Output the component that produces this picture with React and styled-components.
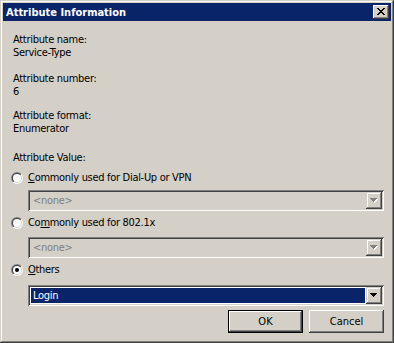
import React from "react";
import styled, { createGlobalStyle, css } from "styled-components";

const GlobalStyle = createGlobalStyle`
  html, body { margin: 0; padding: 0; background: #D4D0C8; }
  * { box-sizing: border-box; }
`;

const FONT = `"DejaVu Sans Condensed", "DejaVu Sans", Tahoma, sans-serif`;

const Window = styled.div`
  width: 394px;
  height: 343px;
  background: #D4D0C8;
  padding: 3px;
  display: flex;
  flex-direction: column;
  font-family: ${FONT};
  font-size: 11px;
  letter-spacing: -0.3px;
  color: #000;
  box-shadow: inset -1px -1px #404040, inset 1px 1px #D4D0C8,
    inset -2px -2px #808080, inset 2px 2px #FFFFFF;
`;

const TitleBar = styled.div`
  height: 18px;
  background: #0A246A;
  display: flex;
  align-items: center;
  justify-content: space-between;
  padding: 0 2px 0 3px;
`;

const TitleText = styled.span`
  color: #fff;
  font-weight: bold;
  font-size: 11px;
  letter-spacing: 0;
  line-height: 13px;
`;

const CloseButton = styled.div`
  width: 16px;
  height: 14px;
  background: #D4D0C8;
  display: flex;
  padding: 3px 0 0 4px;
  box-shadow: inset -1px -1px #404040, inset 1px 1px #FFFFFF,
    inset -2px -2px #808080;
`;

const Content = styled.div`
  flex: 1;
  display: flex;
  flex-direction: column;
  padding: 12px 7px 0 8px;
`;

const InfoGroup = styled.div`
  display: flex;
  flex-direction: column;
  padding-left: 2px;
  margin-bottom: ${(p) => p.$gap || 0}px;
`;

const Line = styled.div`
  line-height: 13px;
  height: 13px;
  white-space: nowrap;
`;

const RadioRow = styled.label`
  display: flex;
  align-items: center;
  height: 13px;
  gap: 5px;
  margin-top: ${(p) => p.$top || 0}px;
  line-height: 13px;
  white-space: nowrap;
`;

const Combo = styled.div`
  margin-left: 17px;
  margin-top: ${(p) => p.$top || 0}px;
  width: 356px;
  height: 21px;
  padding: 2px;
  display: flex;
  background: ${(p) => (p.$disabled ? "#D4D0C8" : "#FFFFFF")};
  box-shadow: inset 1px 1px #808080, inset -1px -1px #FFFFFF,
    inset 2px 2px #404040, inset -2px -2px #D4D0C8;
`;

const ComboText = styled.div`
  flex: 1;
  line-height: 15px;
  padding-left: 2px;
  margin: 1px;
  color: #808080;
  ${(p) =>
    p.$selected &&
    css`
      background: #0A246A;
      color: #FFFFFF;
    `}
`;

const DropButton = styled.div`
  width: 16px;
  height: 17px;
  background: #D4D0C8;
  display: flex;
  align-items: center;
  justify-content: center;
  box-shadow: inset -1px -1px #404040, inset 1px 1px #D4D0C8,
    inset -2px -2px #808080, inset 2px 2px #FFFFFF;
`;

const ButtonRow = styled.div`
  display: flex;
  justify-content: flex-end;
  gap: 6px;
  margin-top: 4px;
`;

const PushButton = styled.div`
  width: 75px;
  height: 23px;
  display: flex;
  align-items: center;
  justify-content: center;
  background: #D4D0C8;
  line-height: 13px;
  letter-spacing: 0;
  ${(p) =>
    p.$default
      ? css`
          box-shadow: inset 0 0 0 1px #000000, inset -2px -2px #404040,
            inset 2px 2px #FFFFFF, inset -3px -3px #808080;
        `
      : css`
          box-shadow: inset -1px -1px #404040, inset 1px 1px #FFFFFF,
            inset -2px -2px #808080;
        `}
`;

const CloseGlyph = () => {
  const rows = [
    "XX....XX",
    ".XX..XX.",
    "..XXXX..",
    "...XX...",
    "..XXXX..",
    ".XX..XX.",
    "XX....XX",
  ];
  const rects = [];
  rows.forEach((r, y) =>
    r.split("").forEach((c, x) => {
      if (c === "X") rects.push(<rect key={`${x}-${y}`} x={x} y={y} width="1" height="1" />);
    })
  );
  return (
    <svg width="8" height="7" viewBox="0 0 8 7" shapeRendering="crispEdges" fill="#000">
      {rects}
    </svg>
  );
};

const Arrow = ({ disabled }) => (
  <svg width="8" height="5" viewBox="0 0 8 5" shapeRendering="crispEdges">
    {disabled && (
      <g fill="#FFFFFF">
        <rect x="1" y="1" width="7" height="1" />
        <rect x="2" y="2" width="5" height="1" />
        <rect x="3" y="3" width="3" height="1" />
        <rect x="4" y="4" width="1" height="1" />
      </g>
    )}
    <g fill={disabled ? "#808080" : "#000000"}>
      <rect x="0" y="0" width="7" height="1" />
      <rect x="1" y="1" width="5" height="1" />
      <rect x="2" y="2" width="3" height="1" />
      <rect x="3" y="3" width="1" height="1" />
    </g>
  </svg>
);

const Radio = ({ checked }) => (
  <svg width="12" height="12" viewBox="0 0 12 12">
    <defs>
      <linearGradient id="rOuter" x1="0" y1="0" x2="1" y2="1">
        <stop offset="0.5" stopColor="#808080" />
        <stop offset="0.5" stopColor="#FFFFFF" />
      </linearGradient>
      <linearGradient id="rInner" x1="0" y1="0" x2="1" y2="1">
        <stop offset="0.5" stopColor="#404040" />
        <stop offset="0.5" stopColor="#D4D0C8" />
      </linearGradient>
    </defs>
    <circle cx="6" cy="6" r="6" fill="url(#rOuter)" />
    <circle cx="6" cy="6" r="5" fill="url(#rInner)" />
    <circle cx="6" cy="6" r="4" fill="#FFFFFF" />
    {checked && <circle cx="6" cy="6" r="2" fill="#000000" />}
  </svg>
);

const RadioSlot = styled.span`
  display: flex;
  width: 12px;
  height: 12px;
`;

const Key = styled.span`
  text-decoration: underline;
`;

export default function App() {
  return (
    <>
      <GlobalStyle />
      <Window>
        <TitleBar>
          <TitleText>Attribute Information</TitleText>
          <CloseButton>
            <CloseGlyph />
          </CloseButton>
        </TitleBar>
        <Content>
          <InfoGroup $gap={13}>
            <Line>Attribute name:</Line>
            <Line>Service-Type</Line>
          </InfoGroup>
          <InfoGroup $gap={11}>
            <Line>Attribute number:</Line>
            <Line>6</Line>
          </InfoGroup>
          <InfoGroup $gap={16}>
            <Line>Attribute format:</Line>
            <Line>Enumerator</Line>
          </InfoGroup>
          <InfoGroup>
            <Line>Attribute Value:</Line>
          </InfoGroup>
          <RadioRow $top={7}>
            <RadioSlot>
              <Radio />
            </RadioSlot>
            <span>
              <Key>C</Key>ommonly used for Dial-Up or VPN
            </span>
          </RadioRow>
          <Combo $disabled $top={6}>
            <ComboText>&lt;none&gt;</ComboText>
            <DropButton>
              <Arrow disabled />
            </DropButton>
          </Combo>
          <RadioRow $top={5}>
            <RadioSlot>
              <Radio />
            </RadioSlot>
            <span>
              Co<Key>m</Key>monly used for 802.1x
            </span>
          </RadioRow>
          <Combo $disabled $top={8}>
            <ComboText>&lt;none&gt;</ComboText>
            <DropButton>
              <Arrow disabled />
            </DropButton>
          </Combo>
          <RadioRow $top={5}>
            <RadioSlot>
              <Radio checked />
            </RadioSlot>
            <span>
              <Key>O</Key>thers
            </span>
          </RadioRow>
          <Combo $top={9}>
            <ComboText $selected>Login</ComboText>
            <DropButton>
              <Arrow />
            </DropButton>
          </Combo>
          <ButtonRow>
            <PushButton $default>OK</PushButton>
            <PushButton>Cancel</PushButton>
          </ButtonRow>
        </Content>
      </Window>
    </>
  );
}
